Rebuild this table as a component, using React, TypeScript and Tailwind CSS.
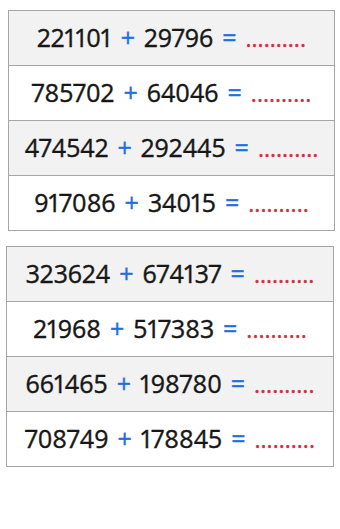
import React from "react";

const groups: [string, string][][] = [
  [
    ["221101", "29796"],
    ["785702", "64046"],
    ["474542", "292445"],
    ["917086", "34015"],
  ],
  [
    ["323624", "674137"],
    ["21968", "517383"],
    ["661465", "198780"],
    ["708749", "178845"],
  ],
];

function SumTable({ rows, className }: { rows: [string, string][]; className: string }) {
  return (
    <table className={`border-collapse border border-[#a6a6a6] ${className}`}>
      <tbody>
        {rows.map(([a, b], i) => (
          <tr key={`row_${i + 1}`} className={i % 2 === 0 ? "bg-[#f2f2f2]" : "bg-white"}>
            <td className="h-[55px] border border-[#a6a6a6] p-0 pb-[2px] text-center text-[25px] leading-none text-[#171717] proportional-nums [-webkit-text-stroke:0.4px_currentColor]">
              {a}
              <span className="mx-[9px] text-[#1f6fe0]">+</span>
              {b}
              <span className="mx-[9px] text-[#1f6fe0]">=</span>
              <span className="text-[#d0303f] text-[23px]">..........</span>
            </td>
          </tr>
        ))}
      </tbody>
    </table>
  );
}

export default function App() {
  return (
    <div
      className="bg-white pt-[10px]"
      style={{ fontFamily: '"Open Sans", "Noto Sans", sans-serif' }}
    >
      <SumTable rows={groups[0]} className="ml-[8px] w-[327px]" />
      <SumTable rows={groups[1]} className="ml-[6px] mt-[15px] w-[328px]" />
    </div>
  );
}
